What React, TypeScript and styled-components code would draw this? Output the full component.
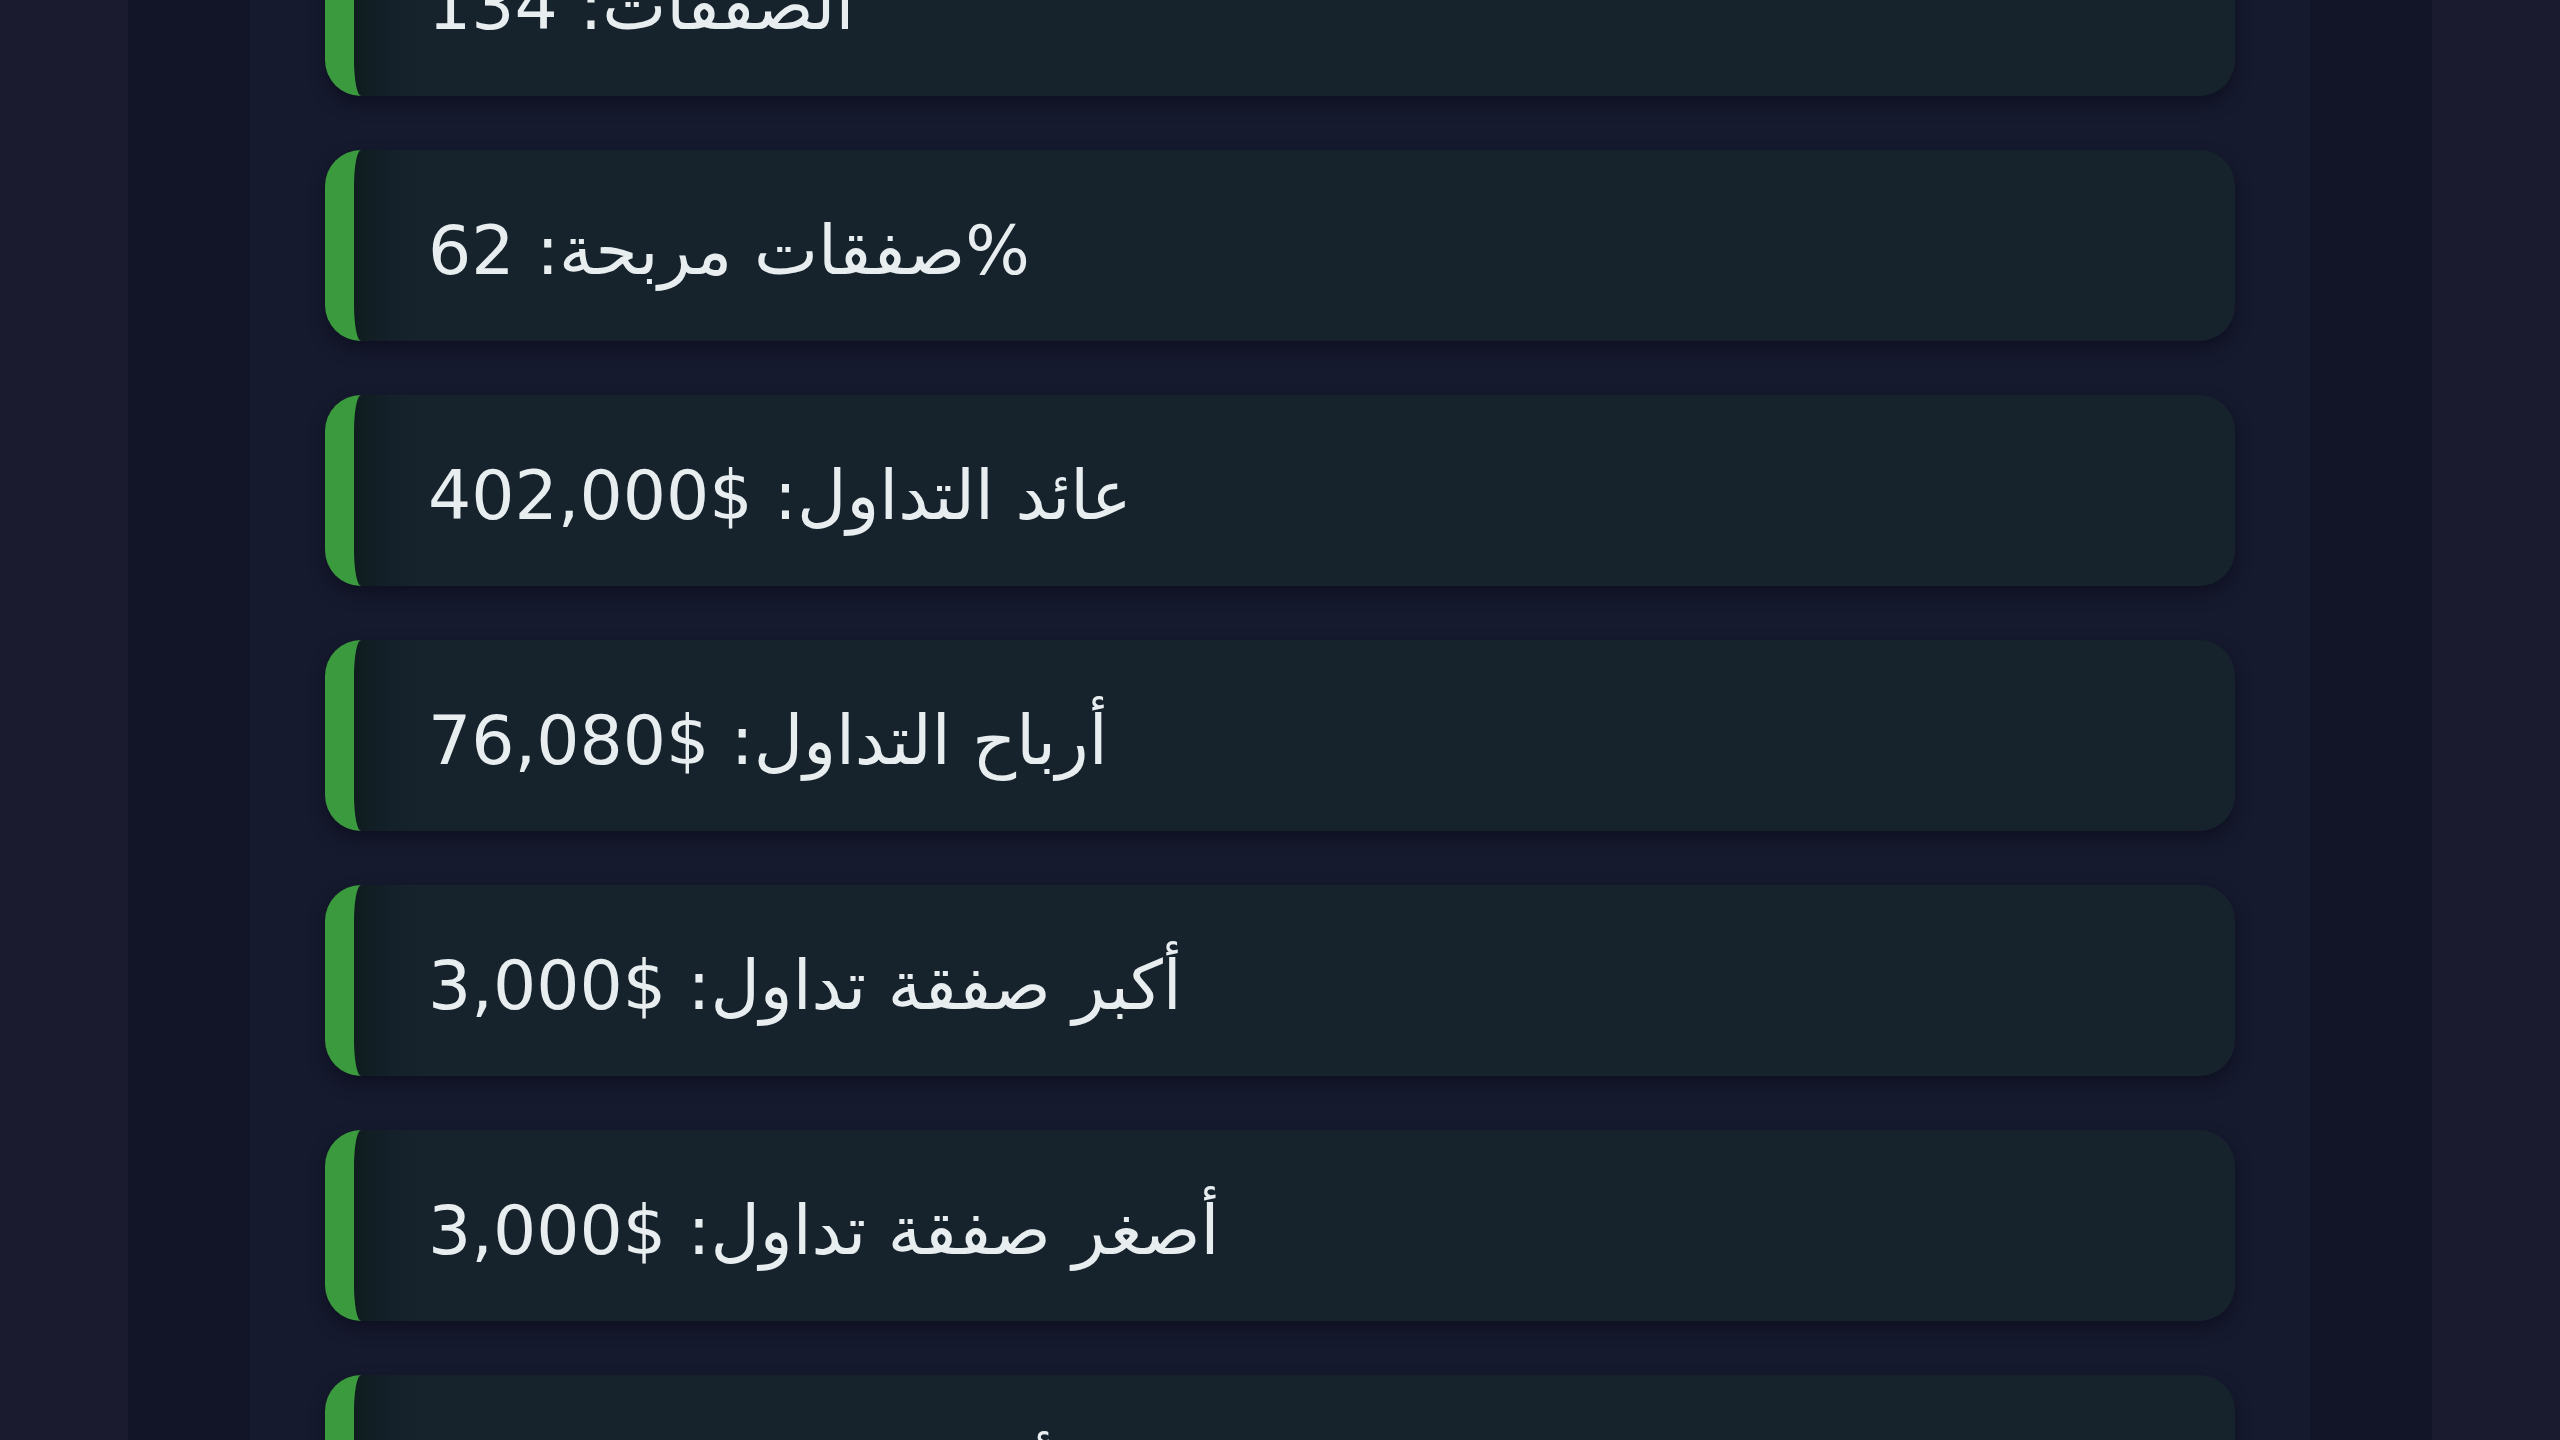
import React from "react";
import styled, { createGlobalStyle } from "styled-components";

const GlobalStyle = createGlobalStyle`
  html, body {
    margin: 0;
    padding: 0;
    background: #1a1b2f;
    font-family: "DejaVu Sans", "Noto Sans", sans-serif;
  }
`;

const Page = styled.div`
  height: 100vh;
  overflow: hidden;
  padding: 0 128px;
  box-sizing: border-box;
  display: flex;
  justify-content: center;
`;

const Column = styled.div`
  flex: 1;
  background: #121527;
  padding: 0 122px;
  display: flex;
`;

const Panel = styled.main`
  flex: 1;
  background: #161a2e;
  padding: 0 75px;
  overflow: hidden;
`;

const List = styled.ul`
  list-style: none;
  margin: -95px 0 0 0;
  padding: 0;
  display: flex;
  flex-direction: column;
  gap: 54px;
`;

const Card = styled.li`
  height: 191px;
  box-sizing: border-box;
  border-radius: 36px;
  border-left: 29px solid #3b9a3d;
  background: linear-gradient(90deg, #0f1c1e 0px, #14202a 36px, #16222c 70px);
  box-shadow: 0 8px 16px rgba(10, 10, 24, 0.55);
  padding: 10px 0 0 74px;
  display: flex;
  align-items: center;
  font-size: 68px;
  color: #e8eef0;
  direction: ltr;
  white-space: nowrap;
`;

const stats = [
  "الصفقات: 134",
  "صفقات مربحة: 62%",
  "عائد التداول: $402,000",
  "أرباح التداول: $76,080",
  "أكبر صفقة تداول: $3,000",
  "أصغر صفقة تداول: $3,000",
  "أعلى ربح: $124,500",
];

export default function App() {
  return (
    <>
      <GlobalStyle />
      <Page>
        <Column>
          <Panel>
            <List>
              {stats.map((s) => (
                <Card key={s}>{s}</Card>
              ))}
            </List>
          </Panel>
        </Column>
      </Page>
    </>
  );
}
